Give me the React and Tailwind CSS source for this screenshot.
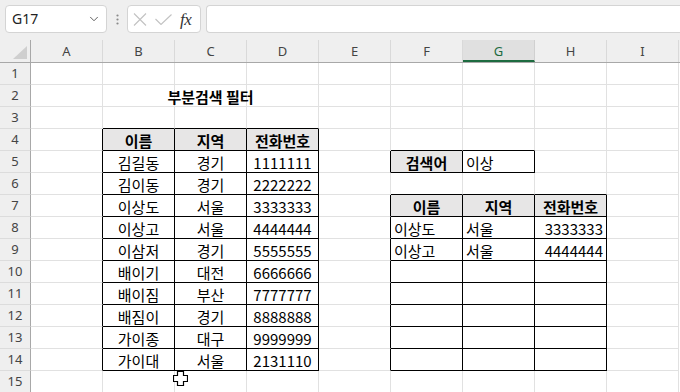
import { ChevronDown } from "lucide-react";

const COLS = ["A", "B", "C", "D", "E", "F", "G", "H", "I"];
const ROWS = Array.from({ length: 15 }, (_, i) => i + 1);

// 테두리 있는 범위 [col1, row1, col2, row2]
const BOXES = [
  [1, 4, 3, 14],
  [5, 5, 6, 5],
  [5, 7, 7, 14],
];

const inBox = (c, r) =>
  BOXES.some(([c1, r1, c2, r2]) => c >= c1 && c <= c2 && r >= r1 && r <= r2);

const list = [
  ["김길동", "경기", "1111111"],
  ["김이동", "경기", "2222222"],
  ["이상도", "서울", "3333333"],
  ["이상고", "서울", "4444444"],
  ["이삼저", "경기", "5555555"],
  ["배이기", "대전", "6666666"],
  ["배이짐", "부산", "7777777"],
  ["배짐이", "경기", "8888888"],
  ["가이종", "대구", "9999999"],
  ["가이대", "서울", "2131110"],
];

const cells = {
  C2: { v: "부분검색 필터", bold: true, align: "center" },
  B4: { v: "이름", head: true },
  C4: { v: "지역", head: true },
  D4: { v: "전화번호", head: true },
  F5: { v: "검색어", head: true },
  G5: { v: "이상", align: "left" },
  F7: { v: "이름", head: true },
  G7: { v: "지역", head: true },
  H7: { v: "전화번호", head: true },
  F8: { v: "이상도", align: "left" },
  G8: { v: "서울", align: "left" },
  H8: { v: "3333333", align: "right" },
  F9: { v: "이상고", align: "left" },
  G9: { v: "서울", align: "left" },
  H9: { v: "4444444", align: "right" },
};
list.forEach((row, i) => {
  ["B", "C", "D"].forEach((col, j) => {
    cells[col + (i + 5)] = { v: row[j], align: "center" };
  });
});

function Toolbar() {
  return (
    <div className="h-[40px] bg-[#efefef] flex items-start pt-[5px]">
      <div className="ml-[5px] w-[102px] h-[28px] bg-white border border-[#d4d4d4] rounded-[4px] flex items-center justify-between pl-[6px] pr-[5px]">
        <span className="font-['Noto_Sans',sans-serif] text-[14px] text-[#222] leading-none">G17</span>
        <ChevronDown size={14} strokeWidth={1.6} className="text-[#555]" />
      </div>
      <div className="w-[20px] h-[28px] flex items-center justify-center">
        <svg width="3" height="11" viewBox="0 0 3 11">
          <circle cx="1.5" cy="1.5" r="1.1" fill="#8a8a8a" />
          <circle cx="1.5" cy="5.5" r="1.1" fill="#8a8a8a" />
          <circle cx="1.5" cy="9.5" r="1.1" fill="#8a8a8a" />
        </svg>
      </div>
      <div className="w-[74px] h-[28px] bg-white border border-[#d4d4d4] rounded-[4px] flex items-center pl-[5px] gap-[8px]">
        <svg width="14" height="13" viewBox="0 0 14 13">
          <path d="M1 0.5 L13 12.5 M13 0.5 L1 12.5" stroke="#c2c2c2" strokeWidth="1.1" fill="none" />
        </svg>
        <svg width="17" height="11" viewBox="0 0 17 11">
          <path d="M0.5 5 L6 10.5 L16.5 0.5" stroke="#c2c2c2" strokeWidth="1.1" fill="none" />
        </svg>
        <span className="font-['Liberation_Serif',serif] italic text-[17px] text-[#333] leading-none tracking-[-0.5px]">fx</span>
      </div>
      <div className="ml-[5px] flex-1 h-[28px] bg-white border border-r-0 border-[#d4d4d4] rounded-l-[4px]" />
    </div>
  );
}

function ColHeader() {
  return (
    <div className="flex h-[22px] bg-[#efefef] border-b border-[#a8a8a8] box-content">
      <div className="w-[31px] h-[22px] border-r border-[#a8a8a8] box-border flex items-end justify-end pr-[3px] pb-[3px]">
        <svg width="14" height="13" viewBox="0 0 14 13">
          <polygon points="0,13 14,0 14,13" fill="#cfcfcf" />
        </svg>
      </div>
      {COLS.map((c) =>
        c === "G" ? (
          <div
            key={c}
            className="w-[72px] h-[22px] bg-[#e0e0e0] border-r border-[#d0d0d0] border-b-2 border-b-[#1d6b40] box-border flex items-center justify-center font-['Noto_Sans',sans-serif] text-[13px] text-[#1d6b40] leading-none pt-[2px]"
          >
            {c}
          </div>
        ) : (
          <div
            key={c}
            className="w-[72px] h-[22px] border-r border-[#d9d9d9] box-border flex items-center justify-center font-['Noto_Sans',sans-serif] text-[13px] text-[#444] leading-none"
          >
            {c}
          </div>
        )
      )}
    </div>
  );
}

function Cell({ ci, r }) {
  const id = COLS[ci] + r;
  const cell = cells[id];
  const rightBlack = inBox(ci, r) || inBox(ci + 1, r);
  const bottomBlack = inBox(ci, r) || inBox(ci, r + 1);
  const head = cell && cell.head;
  const align = head ? "center" : cell ? cell.align : "left";
  return (
    <div
      className={[
        "w-[72px] h-[22px] box-border border-r border-b flex items-center whitespace-nowrap overflow-visible text-black text-[15px] leading-none",
        rightBlack ? "border-r-black" : "border-r-[#e1e1e1]",
        bottomBlack ? "border-b-black" : "border-b-[#e1e1e1]",
        head ? "bg-[#e7e6e6] font-bold" : "",
        cell && cell.bold ? "font-bold" : "",
        align === "center" ? "justify-center" : align === "right" ? "justify-end pr-[3px]" : "justify-start pl-[3px]",
      ].join(" ")}
    >
      {cell ? <span className="pt-[1px]">{cell.v}</span> : null}
    </div>
  );
}

function Sheet() {
  return (
    <div className="font-['Noto_Sans_CJK_KR','Noto_Sans',sans-serif]">
      <ColHeader />
      {ROWS.map((r) => (
        <div key={r} className="flex h-[22px]">
          <div className="w-[31px] h-[22px] box-border bg-[#efefef] border-r border-r-[#a8a8a8] border-b border-b-[#dcdcdc] flex items-center justify-center font-['Noto_Sans',sans-serif] text-[13px] text-[#444] leading-none">
            {r}
          </div>
          {COLS.map((c, ci) => (
            <Cell key={c} ci={ci} r={r} />
          ))}
        </div>
      ))}
    </div>
  );
}

function Cursor() {
  return (
    <svg
      className="absolute left-[173px] top-[371px]"
      width="15"
      height="15"
      viewBox="0 0 15 15"
    >
      <path
        d="M4.5 0.5 H10.5 V4.5 H14.5 V10.5 H10.5 V14.5 H4.5 V10.5 H0.5 V4.5 H4.5 Z"
        fill="white"
        stroke="black"
        strokeWidth="1.2"
      />
    </svg>
  );
}

export default function App() {
  return (
    <div className="relative w-[680px] h-[392px] overflow-hidden bg-white">
      <Toolbar />
      <Sheet />
      <Cursor />
    </div>
  );
}
